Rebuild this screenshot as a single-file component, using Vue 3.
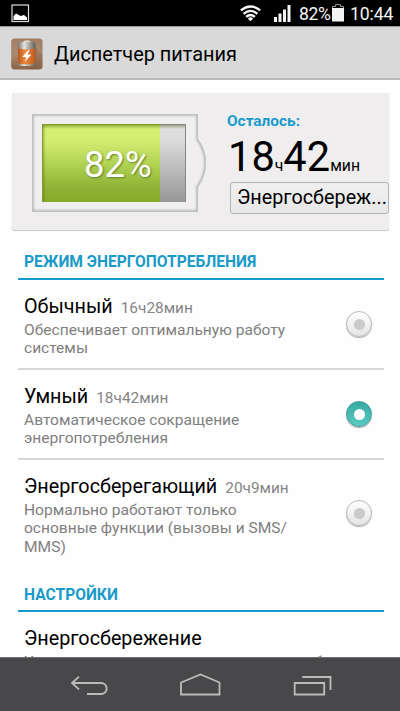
<script setup>
const modes = [
  { name: 'Обычный', time: '16ч28мин', lines: ['Обеспечивает оптимальную работу', 'системы'], on: false },
  { name: 'Умный', time: '18ч42мин', lines: ['Автоматическое сокращение', 'энергопотребления'], on: true },
  { name: 'Энергосберегающий', time: '20ч9мин', lines: ['Нормально работают только', 'основные функции (вызовы и SMS/', 'MMS)'], on: false },
]
</script>

<template>
  <div class="screen">
    <div class="status">
      <svg class="pic" width="19" height="19" viewBox="0 0 19 19">
        <rect x="1" y="1" width="16.5" height="16.5" fill="none" stroke="#ddd" stroke-width="1.2" />
        <path d="M2.5 16V12L5 9.5L7 10.5L9.5 12L13 11L16 13.5V16Z" fill="#fff" />
      </svg>
      <svg class="wifi" width="21" height="17" viewBox="0 0 21 17" fill="none" stroke="#f4f4f4" stroke-width="2.3">
        <path d="M.8 5.4Q10.5-2.5 20.2 5.4" />
        <path d="M3.6 8.8Q10.5 3 17.4 8.8" />
        <path d="M6.1 11.9Q10.5 8.1 14.9 11.9" />
        <path d="M7.8 13.5Q10.5 11.2 13.2 13.5L10.5 16.3Z" fill="#f4f4f4" stroke="none" />
      </svg>
      <svg class="signal" width="17" height="17" viewBox="0 0 17 17" fill="#f4f4f4">
        <rect x="0" y="12" width="3" height="5" />
        <rect x="4.5" y="8.5" width="3" height="8.5" />
        <rect x="9" y="4.5" width="3" height="12.5" />
        <rect x="13.5" y="0" width="3" height="17" />
      </svg>
      <span class="pct">82%</span>
      <svg class="batt" width="12" height="18" viewBox="0 0 12 18">
        <path d="M.5 4V2.5H3.5V.6H8.5V2.5H11.5V4" fill="none" stroke="#999" />
        <rect x="0" y="4" width="12" height="13.5" fill="#f4f4f4" />
      </svg>
      <span class="clock">10:44</span>
    </div>

    <div class="header">
      <svg width="32" height="32" viewBox="0 0 32 32">
        <defs>
          <linearGradient id="tile" x2="0" y2="1"><stop stop-color="#a17d62" /><stop offset=".5" stop-color="#aa8a70" /><stop offset="1" stop-color="#8b6548" /></linearGradient>
          <linearGradient id="orange"><stop stop-color="#b9561c" /><stop offset=".4" stop-color="#f08a3d" /><stop offset="1" stop-color="#bd581c" /></linearGradient>
          <linearGradient id="metal"><stop stop-color="#777269" /><stop offset=".35" stop-color="#e5e2dc" /><stop offset="1" stop-color="#625c54" /></linearGradient>
        </defs>
        <rect x=".2" y=".4" width="31.4" height="31" rx="3.5" fill="url(#tile)" />
        <path d="M24 10L31 16V28L27 31H14L24 27Z" fill="#714d35" opacity=".25" />
        <path d="M12.5 4V3Q16 1.6 19.5 3V4.5H12.5Z" fill="#ddd9d3" />
        <rect x="7" y="4" width="17.5" height="24" rx="2.5" fill="url(#metal)" />
        <path d="M7 10.5Q16 12.5 24.5 10.5V25.3Q16 27.5 7 25.3Z" fill="url(#orange)" />
        <path d="M17.5 12L11.2 19H15.3L13.8 23.8L20.5 16.5H16.4L18.8 12Z" fill="#fff" />
      </svg>
      <h1>Диспетчер питания</h1>
    </div>

    <div class="main">
      <div class="card">
        <div class="gauge">
          <svg width="178" height="102" viewBox="0 0 178 102">
            <defs>
              <linearGradient id="green" x2="0" y2="1"><stop stop-color="#d4f070" /><stop offset=".22" stop-color="#d2ec72" /><stop offset=".55" stop-color="#adcf50" /><stop offset=".82" stop-color="#8fb236" /><stop offset="1" stop-color="#88ab2c" /></linearGradient>
              <linearGradient id="gray" x2="0" y2="1"><stop stop-color="#dedede" /><stop offset=".2" stop-color="#dcdcdc" /><stop offset="1" stop-color="#979797" /></linearGradient>
              <linearGradient id="shade" x2="0" y2="1"><stop stop-color="#3d5000" stop-opacity=".5" /><stop offset="1" stop-color="#3d5000" stop-opacity="0" /></linearGradient>
              <linearGradient id="side"><stop stop-color="#3d5000" stop-opacity=".4" /><stop offset="1" stop-color="#3d5000" stop-opacity="0" /></linearGradient>
              <filter id="soft"><feGaussianBlur stdDeviation="1.3" /></filter>
              <clipPath id="shell"><path d="M2 2H168V27Q176 38 176 51Q176 64 168 75V100H2Z" /></clipPath>
            </defs>
            <path d="M2 2H168V27Q176 38 176 51Q176 64 168 75V100H2Z" fill="#f0eeef" />
            <g clip-path="url(#shell)">
              <path d="M2 2H168V27Q176 38 176 51Q176 64 168 75V100H2Z" fill="none" stroke="#aaa" stroke-width="3" filter="url(#soft)" />
            </g>
            <path d="M2.5 2.5H167.5V27Q175.5 38 175.5 51Q175.5 64 167.5 75V99.5H2.5Z" fill="none" stroke="#c4c4c4" stroke-width=".8" />
            <rect x="12" y="12" width="118" height="78" fill="url(#green)" />
            <rect x="130" y="12" width="26" height="78" fill="url(#gray)" />
            <rect x="12" y="12" width="144" height="5" fill="url(#shade)" />
            <rect x="12" y="12" width="4" height="78" fill="url(#side)" />
            <path d="M12.5 90V12.5H130" fill="none" stroke="#839b27" />
            <path d="M130 12.5H155.5V90" fill="none" stroke="#858585" />
          </svg>
          <span class="level">82%</span>
        </div>
        <div class="remain">
          <div class="label">Осталось:</div>
          <div class="time"><b>18</b><i class="h">ч</i><b>42</b><i class="m">мин</i></div>
          <button>Энергосбереж...</button>
        </div>
      </div>

      <h2>РЕЖИМ ЭНЕРГОПОТРЕБЛЕНИЯ</h2>
      <div v-for="m in modes" :key="m.name" class="mode">
        <div class="text">
          <div class="name"><span>{{ m.name }}</span><small>{{ m.time }}</small></div>
          <p v-for="l in m.lines" :key="l">{{ l }}</p>
        </div>
        <div class="radio" :class="{ on: m.on }"><div class="dot"></div></div>
      </div>
      <h2 class="settings">НАСТРОЙКИ</h2>
      <div class="saving">
        <div class="name"><span>Энергосбережение</span></div>
        <p>Уменьшение расхода энергии в целях сб</p>
      </div>
    </div>

    <div class="nav">
      <svg width="38" height="22" viewBox="0 0 38 22"><path d="M9 1.7L2 8L9 14.3M2.5 8H31.2A5.5 5.5 0 0 1 31.2 19H17" /></svg>
      <svg width="42" height="24" viewBox="0 0 42 24"><path d="M1 21.5V9.5L20.5 1.4L39.5 9.5V21.5Z" /></svg>
      <svg width="40" height="22" viewBox="0 0 40 22"><path d="M1.7 8H31.2V19.5H1.7ZM9.3 2H37.5V15" /></svg>
    </div>
  </div>
</template>

<style>
body { margin: 0; background: #fff; overflow: hidden; }
</style>
<style scoped>
* { box-sizing: border-box; }
.screen { width: 400px; height: 711px; display: flex; flex-direction: column; background: #fefefe; font-family: Roboto, sans-serif; color: #000; overflow: hidden; white-space: nowrap; }
h1, h2, p { margin: 0; font-weight: 400; }
svg { flex: none; display: block; }
.status { height: 26px; flex: none; background: #000; display: flex; color: #f4f4f4; font-size: 17.6px; line-height: 28px; }
.pic { margin: 3.5px 0 0 11px; }
.wifi { margin: 5px 0 0 210px; }
.signal { margin: 5px 0 0 13px; }
.pct { margin-left: 8px; width: 33px; letter-spacing: -.4px; }
.batt { margin-top: 4px; }
.clock { margin-left: 6px; letter-spacing: -.1px; }
.header { height: 54px; flex: none; display: flex; background: #d9d9d9; border-top: 1px solid #999; border-bottom: 2px solid #b9b9b9; padding: 11px 0 0 11px; }
h1 { font-size: 19.9px; line-height: 34px; margin-left: 11px; }
.main { height: 577px; flex: none; overflow: hidden; padding-top: 13px; }
.card { width: 377px; height: 137px; margin-left: 12px; display: flex; background: #efedee; border-radius: 2px; box-shadow: 0 1px 1px #c8c8c8, 0 0 1px #ddd; }
.gauge { flex: none; width: 178px; height: 102px; margin: 19px 0 0 18px; display: grid; }
.gauge > * { grid-area: 1 / 1; }
.level { font-size: 36.5px; line-height: 42px; margin: 32px 0 0 54px; color: #fff; text-shadow: 1px 1px 2px #60802a; }
.remain { flex: none; margin-left: 19px; padding-top: 18px; width: 162px; }
.label { color: #199ccc; font-weight: 700; font-size: 15.4px; line-height: 20px; }
.time { display: flex; align-items: baseline; height: 51px; line-height: 52px; margin-left: 1px; }
.time b { font-weight: 400; font-size: 41.6px; }
.time i { font-style: normal; font-size: 15.8px; }
button { display: block; margin: 0 0 0 3px; width: 159px; height: 32px; border: 1px solid #b4b4b4; border-radius: 3px; background: linear-gradient(#f1f0f0, #e7e7e7); font: 19.8px/30px Roboto, sans-serif; padding: 0 0 0 6px; text-align: left; color: #000; }
h2 { margin: 20px 0 0 18px; width: 366px; height: 30px; padding-left: 6px; border-bottom: 2px solid #169bd5; font-size: 15.6px; font-weight: 700; line-height: 25px; color: #199ac8; }
.mode { margin-left: 18px; width: 366px; height: 90px; padding: 14px 12px 0 6px; display: flex; justify-content: space-between; border-bottom: 2px solid #d7d7d7; }
.name { display: flex; align-items: baseline; font-size: 19.75px; line-height: 25px; }
small { font-size: 15.4px; margin-left: 8px; color: #858585; }
p { font-size: 15.55px; line-height: 18.4px; color: #808080; }
.mode:nth-of-type(4) { height: 108px; border: 0; }
.radio { width: 26px; height: 26px; margin-top: 17px; border-radius: 50%; border: 1px solid #b8b8b8; background: linear-gradient(#fff, #e4e4e4); box-shadow: 0 1px 1px #aaa; display: grid; place-items: center; }
.mode:nth-of-type(4) .radio { margin-top: 26px; }
.dot { width: 11px; height: 11px; border-radius: 50%; background: #cacaca; }
.on { background: linear-gradient(#37aaa2, #5bcbc3); border-color: #3b9b95; }
.on .dot { background: #fff; }
.settings { margin-top: 14px; line-height: 26px; }
.saving { padding: 14px 0 0 24px; }
.saving .name { margin-bottom: 2px; }
.nav { height: 54px; flex: none; background: #48484a; border-top: 1px solid #707072; display: flex; padding: 17px 0 0 70px; }
.nav svg { fill: none; stroke: #bcbcbc; stroke-width: 1.8; }
.nav svg:nth-child(2) { margin: -2px 0 0 72px; }
.nav svg:nth-child(3) { margin-left: 71px; }
</style>
